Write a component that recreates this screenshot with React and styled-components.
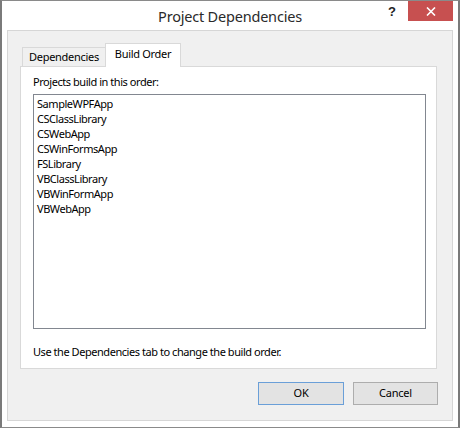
import React from "react";
import styled, { createGlobalStyle } from "styled-components";

const Global = createGlobalStyle`
  html, body { margin: 0; padding: 0; background: #ffffff; }
  body {
    font-family: "Segoe UI", "Noto Sans", "Open Sans", sans-serif;
    font-size: 11px;
    letter-spacing: -0.45px;
    color: #000;
  }
  * { box-sizing: border-box; }
`;

const Window = styled.div`
  width: 460px;
  height: 428px;
  background: #ffffff;
  border: 1px solid #8a8a8a;
  border-left: 2px solid #7a7a7a;
  border-right: 2px solid #7a7a7a;
  padding: 0 5px 6px 5px;
  display: flex;
  flex-direction: column;
`;

const TitleBar = styled.div`
  height: 29px;
  display: grid;
  grid-template-columns: 1fr auto 1fr;
  align-items: start;
`;

const Title = styled.div`
  grid-column: 2;
  font-size: 14.5px;
  letter-spacing: -0.2px;
  line-height: 20px;
  padding-top: 5px;
  color: #2a2a2a;
`;

const Controls = styled.div`
  grid-column: 3;
  justify-self: end;
  display: flex;
  align-items: flex-start;
`;

const HelpButton = styled.div`
  width: 30px;
  height: 21px;
  display: flex;
  align-items: center;
  justify-content: center;
  font-family: "Liberation Sans", Arial, sans-serif;
  font-weight: bold;
  font-size: 13px;
  letter-spacing: 0;
  color: #222;
  padding-right: 2px;
`;

const CloseButton = styled.div`
  width: 45px;
  height: 20px;
  background: #c75050;
  display: flex;
  align-items: center;
  justify-content: center;
`;

const Client = styled.div`
  flex: 1;
  background: #f0f0f0;
  border: 1px solid #d6d6d6;
  padding: 12px 15px 14px 12px;
  display: flex;
  flex-direction: column;
`;

const TabStrip = styled.div`
  display: flex;
  align-items: flex-end;
  padding-left: 2px;
  height: 23px;
`;

const Tab = styled.div`
  position: relative;
  display: flex;
  align-items: center;
  justify-content: center;
  border: 1px solid #d9d9d9;
  border-bottom: none;
  background: ${(p) => (p.$active ? "#ffffff" : "#f0f0f0")};
  height: ${(p) => (p.$active ? "24px" : "19px")};
  width: ${(p) => (p.$active ? "76px" : "84px")};
  margin-bottom: ${(p) => (p.$active ? "-1px" : "0")};
  margin-left: ${(p) => (p.$active ? "-1px" : "0")};
  z-index: ${(p) => (p.$active ? 1 : 0)};
  padding-bottom: ${(p) => (p.$active ? "3px" : "0")};
  line-height: 16px;
  letter-spacing: -0.3px;
`;

const Panel = styled.div`
  height: 303px;
  background: #ffffff;
  border: 1px solid #d9d9d9;
  padding: 7px 10px 0 12px;
  display: flex;
  flex-direction: column;
`;

const Label = styled.div`
  line-height: 16px;
  height: 16px;
`;

const List = styled.div`
  margin-top: 4px;
  height: 235px;
  border: 1px solid #828790;
  padding: 1px 3px;
  display: flex;
  flex-direction: column;
`;

const Item = styled.div`
  height: 15px;
  line-height: 15px;
  white-space: nowrap;
`;

const Note = styled.div`
  margin-top: 15px;
  line-height: 16px;
`;

const ButtonRow = styled.div`
  margin-top: 13px;
  display: flex;
  justify-content: flex-end;
  gap: 9px;
  margin-right: -1px;
`;

const Button = styled.div`
  width: ${(p) => (p.$wide ? "86px" : "85px")};
  height: 23px;
  border: 1px solid ${(p) => (p.$default ? "#6a9fd8" : "#adadad")};
  background: #e3e3e3;
  display: flex;
  align-items: center;
  justify-content: center;
  line-height: 16px;
  padding-bottom: 1px;
  letter-spacing: -0.2px;
`;

const projects = [
  "SampleWPFApp",
  "CSClassLibrary",
  "CSWebApp",
  "CSWinFormsApp",
  "FSLibrary",
  "VBClassLibrary",
  "VBWinFormApp",
  "VBWebApp",
];

export default function App() {
  return (
    <>
      <Global />
      <Window>
        <TitleBar>
          <Title>Project Dependencies</Title>
          <Controls>
            <HelpButton>?</HelpButton>
            <CloseButton>
              <svg width="10" height="9" viewBox="0 0 10 9">
                <path d="M1 0.5 L9 8.5 M9 0.5 L1 8.5" stroke="#ffffff" strokeWidth="1.6" />
              </svg>
            </CloseButton>
          </Controls>
        </TitleBar>
        <Client>
          <TabStrip>
            <Tab>Dependencies</Tab>
            <Tab $active>Build Order</Tab>
          </TabStrip>
          <Panel>
            <Label>Projects build in this order:</Label>
            <List>
              {projects.map((p) => (
                <Item key={p}>{p}</Item>
              ))}
            </List>
            <Note>Use the Dependencies tab to change the build order.</Note>
          </Panel>
          <ButtonRow>
            <Button $default $wide>OK</Button>
            <Button>Cancel</Button>
          </ButtonRow>
        </Client>
      </Window>
    </>
  );
}
